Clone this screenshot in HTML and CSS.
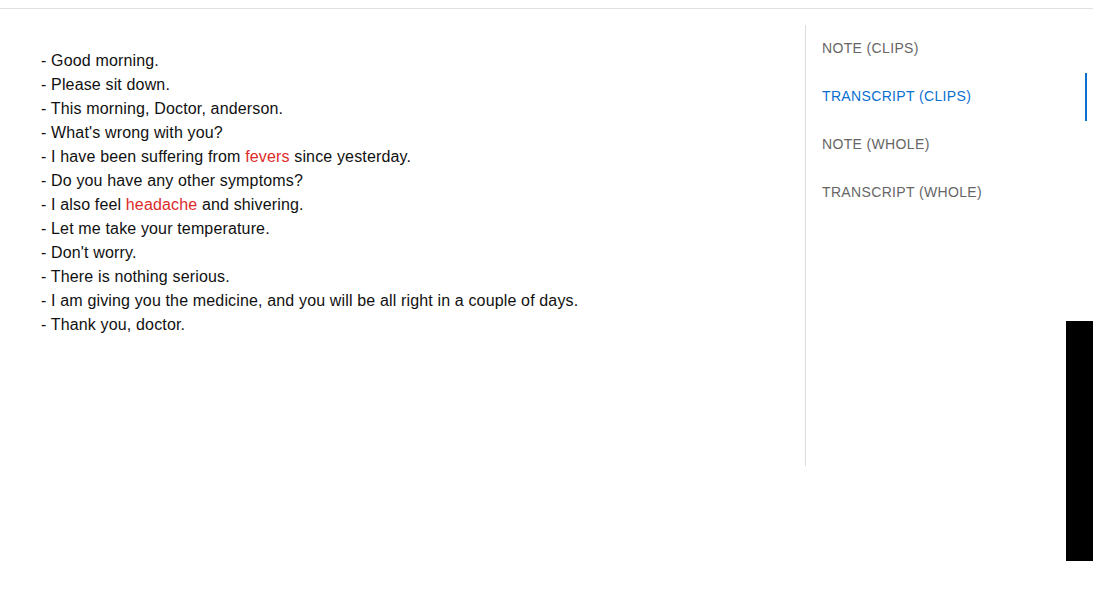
FILE: index.html
```html
<!DOCTYPE html>
<html>
<head>
<meta charset="utf-8">
<link rel="stylesheet" href="styles.css">
</head>
<body>
<div class="topbar"></div>
<div class="layout">
  <main class="content">
    <div class="transcript">
      <p>- Good morning.</p>
      <p>- Please sit down.</p>
      <p>- This morning, Doctor, anderson.</p>
      <p>- What's wrong with you?</p>
      <p>- I have been suffering from <span class="hl">fevers</span> since yesterday.</p>
      <p>- Do you have any other symptoms?</p>
      <p>- I also feel <span class="hl">headache</span> and shivering.</p>
      <p>- Let me take your temperature.</p>
      <p>- Don't worry.</p>
      <p>- There is nothing serious.</p>
      <p>- I am giving you the medicine, and you will be all right in a couple of days.</p>
      <p>- Thank you, doctor.</p>
    </div>
  </main>
  <nav class="sidebar">
    <a class="tab">NOTE (CLIPS)</a>
    <a class="tab active">TRANSCRIPT (CLIPS)</a>
    <a class="tab">NOTE (WHOLE)</a>
    <a class="tab">TRANSCRIPT (WHOLE)</a>
  </nav>
</div>
<div class="side-tab"></div>
</body>
</html>
```
FILE: styles.css
```css
html, body {
  margin: 0;
  padding: 0;
  background: #fff;
}
body {
  font-family: "Liberation Sans", Arial, sans-serif;
  width: 1093px;
  height: 594px;
  overflow: hidden;
  position: relative;
}
.topbar {
  height: 8px;
  border-bottom: 1px solid #e0e0e0;
}
.layout {
  display: flex;
  padding-top: 16px;
}
.content {
  width: 805px;
  padding: 24px 0 0 41px;
  box-sizing: border-box;
}
.transcript p {
  margin: 0;
  font-size: 16px;
  line-height: 24px;
  letter-spacing: 0.15px;
  color: #111;
}
.hl {
  color: #dc2b2b;
}
.sidebar {
  width: 281px;
  height: 441px;
  border-left: 1px solid #ddd;
  display: flex;
  flex-direction: column;
}
.tab {
  display: flex;
  align-items: center;
  height: 48px;
  box-sizing: border-box;
  padding: 0 0 2px 16px;
  font-size: 14px;
  letter-spacing: 0.35px;
  color: #666;
  border-right: 2px solid transparent;
}
.tab.active {
  color: #0a6fd1;
  border-right-color: #0a6fd1;
}
.side-tab {
  position: absolute;
  left: 1066px;
  top: 321px;
  width: 27px;
  height: 240px;
  background: #000;
}
```
